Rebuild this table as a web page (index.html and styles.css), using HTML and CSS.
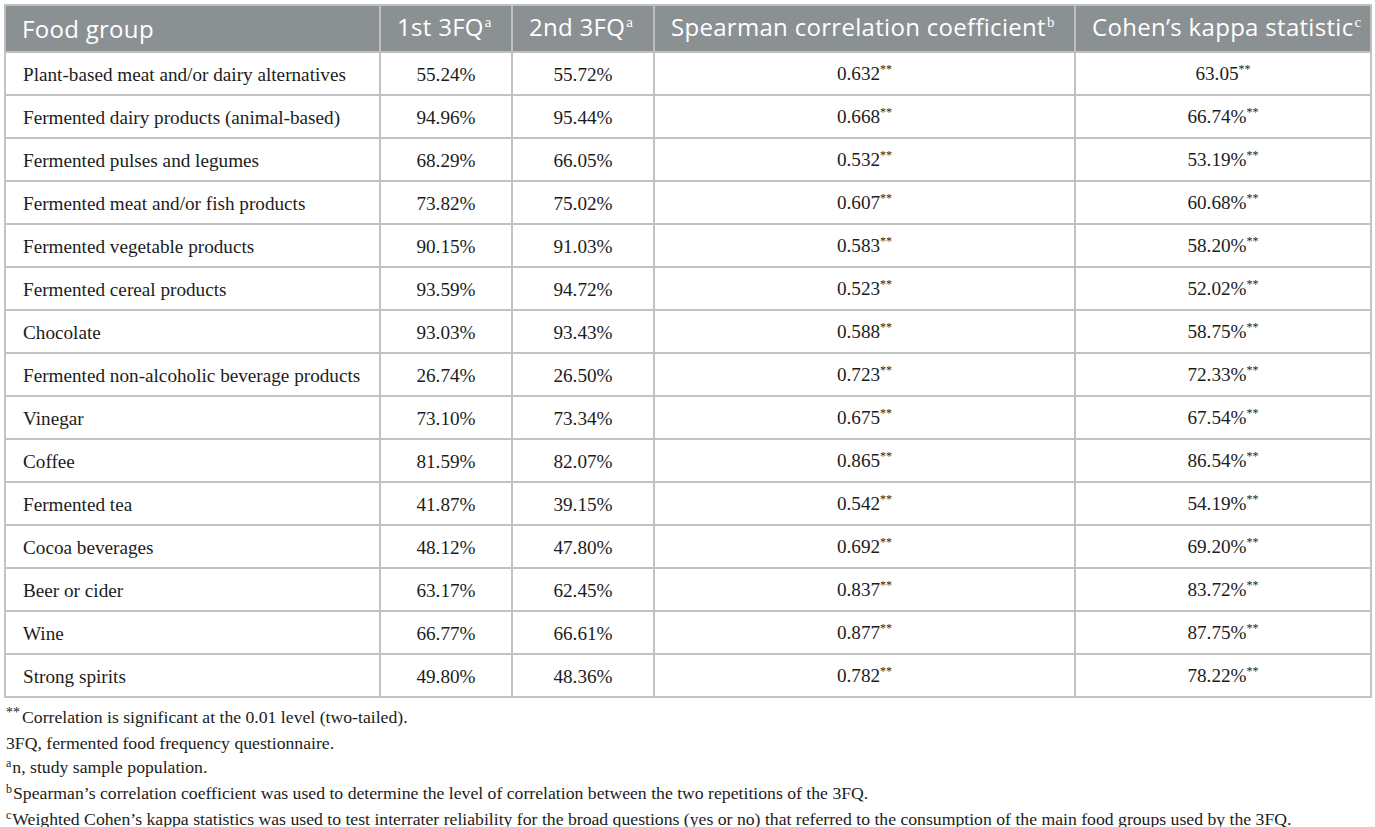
FILE: index.html
```html
<!DOCTYPE html>
<html lang="en">
<head>
<meta charset="utf-8">
<title>3FQ reliability table</title>
<link rel="stylesheet" href="styles.css">
</head>
<body>
<div class="page">
  <table class="data">
    <colgroup>
      <col class="c-group">
      <col class="c-first">
      <col class="c-second">
      <col class="c-spear">
      <col class="c-kappa">
    </colgroup>
    <thead>
      <tr>
        <th>Food group</th>
        <th>1st 3FQ<sup>a</sup></th>
        <th>2nd 3FQ<sup>a</sup></th>
        <th>Spearman correlation coefficient<sup>b</sup></th>
        <th>Cohen’s kappa statistic<sup>c</sup></th>
      </tr>
    </thead>
    <tbody>
      <tr><td>Plant-based meat and/or dairy alternatives</td><td>55.24%</td><td>55.72%</td><td>0.632<sup>**</sup></td><td>63.05<sup>**</sup></td></tr>
      <tr><td>Fermented dairy products (animal-based)</td><td>94.96%</td><td>95.44%</td><td>0.668<sup>**</sup></td><td>66.74%<sup>**</sup></td></tr>
      <tr><td>Fermented pulses and legumes</td><td>68.29%</td><td>66.05%</td><td>0.532<sup>**</sup></td><td>53.19%<sup>**</sup></td></tr>
      <tr><td>Fermented meat and/or fish products</td><td>73.82%</td><td>75.02%</td><td>0.607<sup>**</sup></td><td>60.68%<sup>**</sup></td></tr>
      <tr><td>Fermented vegetable products</td><td>90.15%</td><td>91.03%</td><td>0.583<sup>**</sup></td><td>58.20%<sup>**</sup></td></tr>
      <tr><td>Fermented cereal products</td><td>93.59%</td><td>94.72%</td><td>0.523<sup>**</sup></td><td>52.02%<sup>**</sup></td></tr>
      <tr><td>Chocolate</td><td>93.03%</td><td>93.43%</td><td>0.588<sup>**</sup></td><td>58.75%<sup>**</sup></td></tr>
      <tr><td>Fermented non-alcoholic beverage products</td><td>26.74%</td><td>26.50%</td><td>0.723<sup>**</sup></td><td>72.33%<sup>**</sup></td></tr>
      <tr><td>Vinegar</td><td>73.10%</td><td>73.34%</td><td>0.675<sup>**</sup></td><td>67.54%<sup>**</sup></td></tr>
      <tr><td>Coffee</td><td>81.59%</td><td>82.07%</td><td>0.865<sup>**</sup></td><td>86.54%<sup>**</sup></td></tr>
      <tr><td>Fermented tea</td><td>41.87%</td><td>39.15%</td><td>0.542<sup>**</sup></td><td>54.19%<sup>**</sup></td></tr>
      <tr><td>Cocoa beverages</td><td>48.12%</td><td>47.80%</td><td>0.692<sup>**</sup></td><td>69.20%<sup>**</sup></td></tr>
      <tr><td>Beer or cider</td><td>63.17%</td><td>62.45%</td><td>0.837<sup>**</sup></td><td>83.72%<sup>**</sup></td></tr>
      <tr><td>Wine</td><td>66.77%</td><td>66.61%</td><td>0.877<sup>**</sup></td><td>87.75%<sup>**</sup></td></tr>
      <tr><td>Strong spirits</td><td>49.80%</td><td>48.36%</td><td>0.782<sup>**</sup></td><td>78.22%<sup>**</sup></td></tr>
    </tbody>
  </table>
  <div class="notes">
    <p><sup class="stars">**</sup>Correlation is significant at the 0.01 level (two-tailed).</p>
    <p>3FQ, fermented food frequency questionnaire.</p>
    <p><sup>a</sup>n, study sample population.</p>
    <p><sup>b</sup>Spearman’s correlation coefficient was used to determine the level of correlation between the two repetitions of the 3FQ.</p>
    <p><sup>c</sup>Weighted Cohen’s kappa statistics was used to test interrater reliability for the broad questions (yes or no) that referred to the consumption of the main food groups used by the 3FQ.</p>
  </div>
</div>
</body>
</html>
```

FILE: styles.css
```css
html, body {
  margin: 0;
  padding: 0;
  background: #ffffff;
}

.page {
  padding: 4px 5px 0 4px;
  font-family: "Liberation Serif", "Times New Roman", serif;
  color: #1c1c1c;
}

.data {
  width: 1366px;
  border-collapse: collapse;
  table-layout: fixed;
}

.c-group { width: 375px; }
.c-first { width: 132px; }
.c-second { width: 142px; }
.c-spear { width: 421px; }
.c-kappa { width: 296px; }

.data th {
  background: #8b9093;
  color: #ffffff;
  font-family: "Open Sans", "Noto Sans", sans-serif;
  font-weight: 400;
  font-size: 24px;
  letter-spacing: 0.3px;
  text-align: left;
  height: 45px;
  padding: 0 16px;
  border: 2px solid #bdbfc0;
  white-space: nowrap;
  line-height: 28px;
}

.data th sup {
  font-family: "Liberation Serif", serif;
  font-size: 15px;
  letter-spacing: 0;
  vertical-align: 0;
  position: relative;
  top: -9px;
  margin-left: 1px;
}

.data td {
  font-size: 19.2px;
  height: 39px;
  padding: 2px 17px 0;
  line-height: 24px;
  border: 2px solid #c2c2c2;
  text-align: center;
  white-space: nowrap;
}

.data td:first-child {
  text-align: left;
}

.data td sup {
  font-size: 12px;
  vertical-align: 0;
  position: relative;
  top: -7px;
}

.notes {
  margin-top: 7px;
  padding-left: 2px;
}

.notes p {
  margin: 0;
  font-size: 17.7px;
  line-height: 24px;
  white-space: nowrap;
}

.notes sup {
  font-size: 12px;
  vertical-align: 0;
  position: relative;
  top: -6px;
  margin-right: 1px;
}

.notes sup.stars {
  font-size: 14px;
  margin-right: 2px;
}
```
